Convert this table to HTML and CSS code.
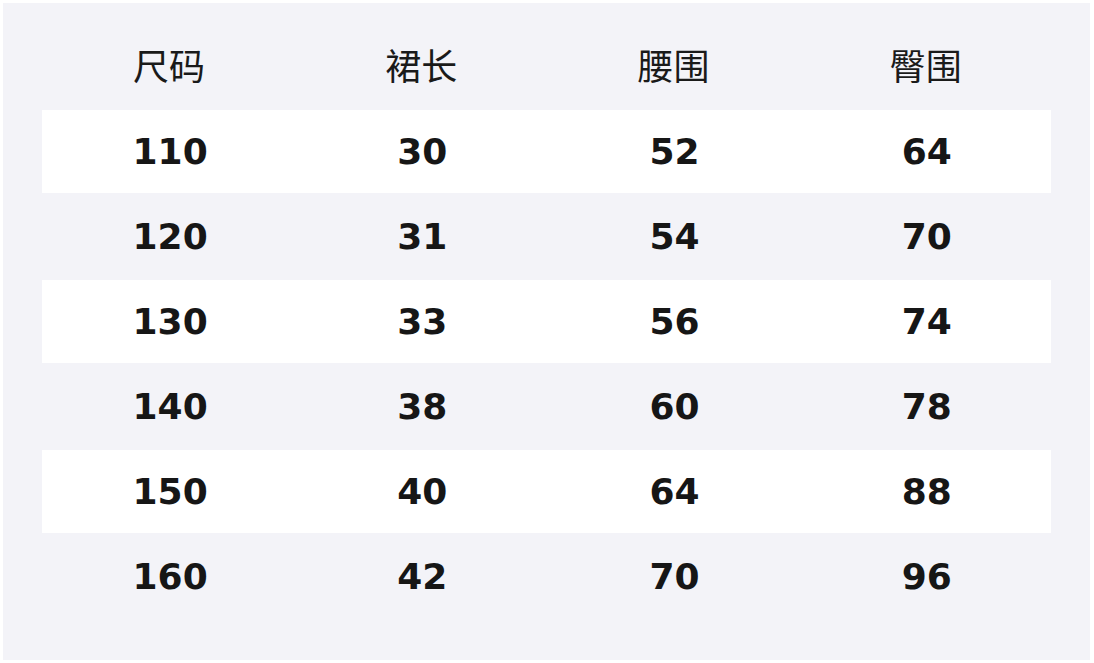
FILE: index.html
```html
<!DOCTYPE html>
<html lang="zh">
<head>
<meta charset="utf-8">
<title>尺码表</title>
<link rel="stylesheet" href="styles.css">
</head>
<body>
<div class="panel">
  <div class="row head">
    <div class="cell">尺码</div>
    <div class="cell">裙长</div>
    <div class="cell">腰围</div>
    <div class="cell">臀围</div>
  </div>
  <div class="row odd"><div class="cell">110</div><div class="cell">30</div><div class="cell">52</div><div class="cell">64</div></div>
  <div class="row"><div class="cell">120</div><div class="cell">31</div><div class="cell">54</div><div class="cell">70</div></div>
  <div class="row odd"><div class="cell">130</div><div class="cell">33</div><div class="cell">56</div><div class="cell">74</div></div>
  <div class="row"><div class="cell">140</div><div class="cell">38</div><div class="cell">60</div><div class="cell">78</div></div>
  <div class="row odd"><div class="cell">150</div><div class="cell">40</div><div class="cell">64</div><div class="cell">88</div></div>
  <div class="row"><div class="cell">160</div><div class="cell">42</div><div class="cell">70</div><div class="cell">96</div></div>
</div>
</body>
</html>
```
FILE: styles.css
```css
html, body {
  margin: 0;
  padding: 0;
  background: #ffffff;
}
.panel {
  box-sizing: border-box;
  margin: 3px;
  width: 1087px;
  height: 657px;
  padding: 21px 39px 0 39px;
  background: #f3f3f8;
  display: flex;
  flex-direction: column;
  gap: 2px;
}
.row {
  display: grid;
  grid-template-columns: repeat(4, 1fr);
  height: 83px;
  align-items: center;
  color: #161616;
  font-family: "DejaVu Sans", "Noto Sans CJK SC", sans-serif;
  font-size: 36px;
  font-weight: 700;
}
.row .cell {
  padding-left: 4px;
}
.row.head {
  height: 84px;
  font-family: "Noto Sans CJK SC", sans-serif;
  font-weight: 400;
  color: #1a1a1a;
}
.row.head .cell {
  padding-left: 2px;
  padding-bottom: 4px;
}
.row.odd {
  background: #ffffff;
}
.cell {
  text-align: center;
  line-height: 1;
}
```
